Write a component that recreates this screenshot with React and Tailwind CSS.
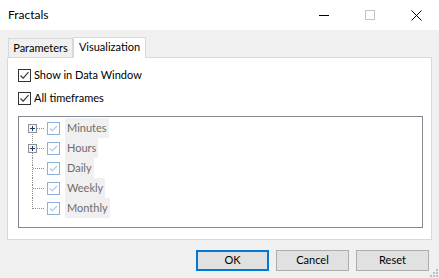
import { useState } from "react";

const font = { fontFamily: 'Lato, "Segoe UI", sans-serif' };

function BigCheck() {
  return (
    <span className="w-[13px] h-[13px] border border-[#333333] bg-white flex items-center justify-center shrink-0">
      <svg width="11" height="11" viewBox="0 0 11 11">
        <path d="M1.5 5.5 L4.2 8.2 L9.5 2.2" fill="none" stroke="#333333" strokeWidth="1.1" />
      </svg>
    </span>
  );
}

function TreeCheck() {
  return (
    <span className="w-[13px] h-[13px] border border-[#8eb2d6] bg-white flex items-center justify-center shrink-0">
      <svg width="11" height="11" viewBox="0 0 11 11">
        <path d="M2 5.5 L4.3 7.8 L9 3" fill="none" stroke="#a8c6e6" strokeWidth="1.1" />
      </svg>
    </span>
  );
}

function Connector({ first, last, plus }) {
  return (
    <svg width="20" height="20" viewBox="0 0 20 20" className="shrink-0" shapeRendering="crispEdges">
      {!first && <line x1="8.5" y1="0" x2="8.5" y2={last ? 11 : 7} stroke="#8c8c8c" strokeDasharray="1 1" />}
      {!last && <line x1="8.5" y1={first ? 16 : 7} x2="8.5" y2="20" stroke="#8c8c8c" strokeDasharray="1 1" />}
      <line x1={plus ? 13 : 9} y1="10.5" x2="20" y2="10.5" stroke="#8c8c8c" strokeDasharray="1 1" />
      {plus && (
        <g>
          <rect x="4.5" y="6.5" width="8" height="8" fill="#f4f4f4" stroke="#919191" />
          <line x1="6" y1="10.5" x2="11" y2="10.5" stroke="#1e3c72" />
          <line x1="8.5" y1="8" x2="8.5" y2="13" stroke="#1e3c72" />
        </g>
      )}
    </svg>
  );
}

const rows = [
  { label: "Minutes", plus: true },
  { label: "Hours", plus: true },
  { label: "Daily" },
  { label: "Weekly" },
  { label: "Monthly" },
];

export default function App() {
  const [tab] = useState("vis");

  return (
    <div className="w-[439px] h-[278px] bg-[#f0f0f0] flex flex-col text-[11px] text-black relative overflow-hidden" style={font}>
      <div className="h-[30px] bg-white flex items-center shrink-0">
        <span className="pl-2 flex-1 text-[12px]">Fractals</span>
        <div className="w-[46px] h-[30px] flex items-center justify-center">
          <span className="w-[10px] h-px bg-black" />
        </div>
        <div className="w-[46px] h-[30px] flex items-center justify-center">
          <span className="w-[10px] h-[10px] border border-[#c4c4c4]" />
        </div>
        <div className="w-[46px] h-[30px] flex items-center justify-center">
          <svg width="11" height="11" viewBox="0 0 11 11">
            <path d="M0.5 0.5 L10.5 10.5 M10.5 0.5 L0.5 10.5" stroke="#000" strokeWidth="1" />
          </svg>
        </div>
      </div>

      <div className="px-[7px] pt-[7px]">
        <div className="flex items-end h-[20px]">
          <div className="ml-px w-[65px] h-[19px] border border-b-0 border-[#d9d9d9] bg-[#f0f0f0] flex items-center justify-center pt-px">
            Parameters
          </div>
          <div className={"w-[73px] h-[21px] -mb-px border border-b-0 border-[#d9d9d9] bg-white flex items-center justify-center relative z-10 pb-[2px]" + (tab ? "" : "")}>
            Visualization
          </div>
        </div>

        <div className="w-[425px] h-[183px] bg-white border border-[#d9d9d9] pl-[10px] pt-[11px] pr-[9px]">
          <div className="flex items-center gap-[3px] h-[13px]">
            <BigCheck />
            <span>Show in Data Window</span>
          </div>
          <div className="flex items-center gap-[3px] h-[13px] mt-[10px]">
            <BigCheck />
            <span>All timeframes</span>
          </div>

          <div className="mt-[11px] w-[405px] h-[112px] border border-[#828790] pt-px pl-[5px]">
            {rows.map((r, i) => (
              <div key={r.label} className="flex items-center h-[20px]">
                <Connector first={i === 0} last={i === rows.length - 1} plus={r.plus} />
                <span className="ml-[3px]"><TreeCheck /></span>
                <span className="ml-[5px] h-[20px] px-[2px] bg-[#f0f0f0] text-[#6d6d6d] flex items-center">{r.label}</span>
              </div>
            ))}
          </div>
        </div>
      </div>

      <div className="flex justify-end gap-[7px] pr-[10px] mt-[10px]">
        <button className="w-[73px] h-[21px] bg-[#e1e1e1] border-2 border-[#0078d7] flex items-center justify-center">OK</button>
        <button className="w-[73px] h-[21px] bg-[#e1e1e1] border border-[#adadad] flex items-center justify-center">Cancel</button>
        <button className="w-[73px] h-[21px] bg-[#e1e1e1] border border-[#adadad] flex items-center justify-center">Reset</button>
      </div>

      <svg width="10" height="10" viewBox="0 0 10 10" className="absolute right-0 bottom-0" shapeRendering="crispEdges">
        <rect x="7" y="1" width="2" height="2" fill="#bcbcbc" />
        <rect x="4" y="4" width="2" height="2" fill="#bcbcbc" />
        <rect x="7" y="4" width="2" height="2" fill="#bcbcbc" />
        <rect x="1" y="7" width="2" height="2" fill="#bcbcbc" />
        <rect x="4" y="7" width="2" height="2" fill="#bcbcbc" />
        <rect x="7" y="7" width="2" height="2" fill="#bcbcbc" />
      </svg>
    </div>
  );
}
